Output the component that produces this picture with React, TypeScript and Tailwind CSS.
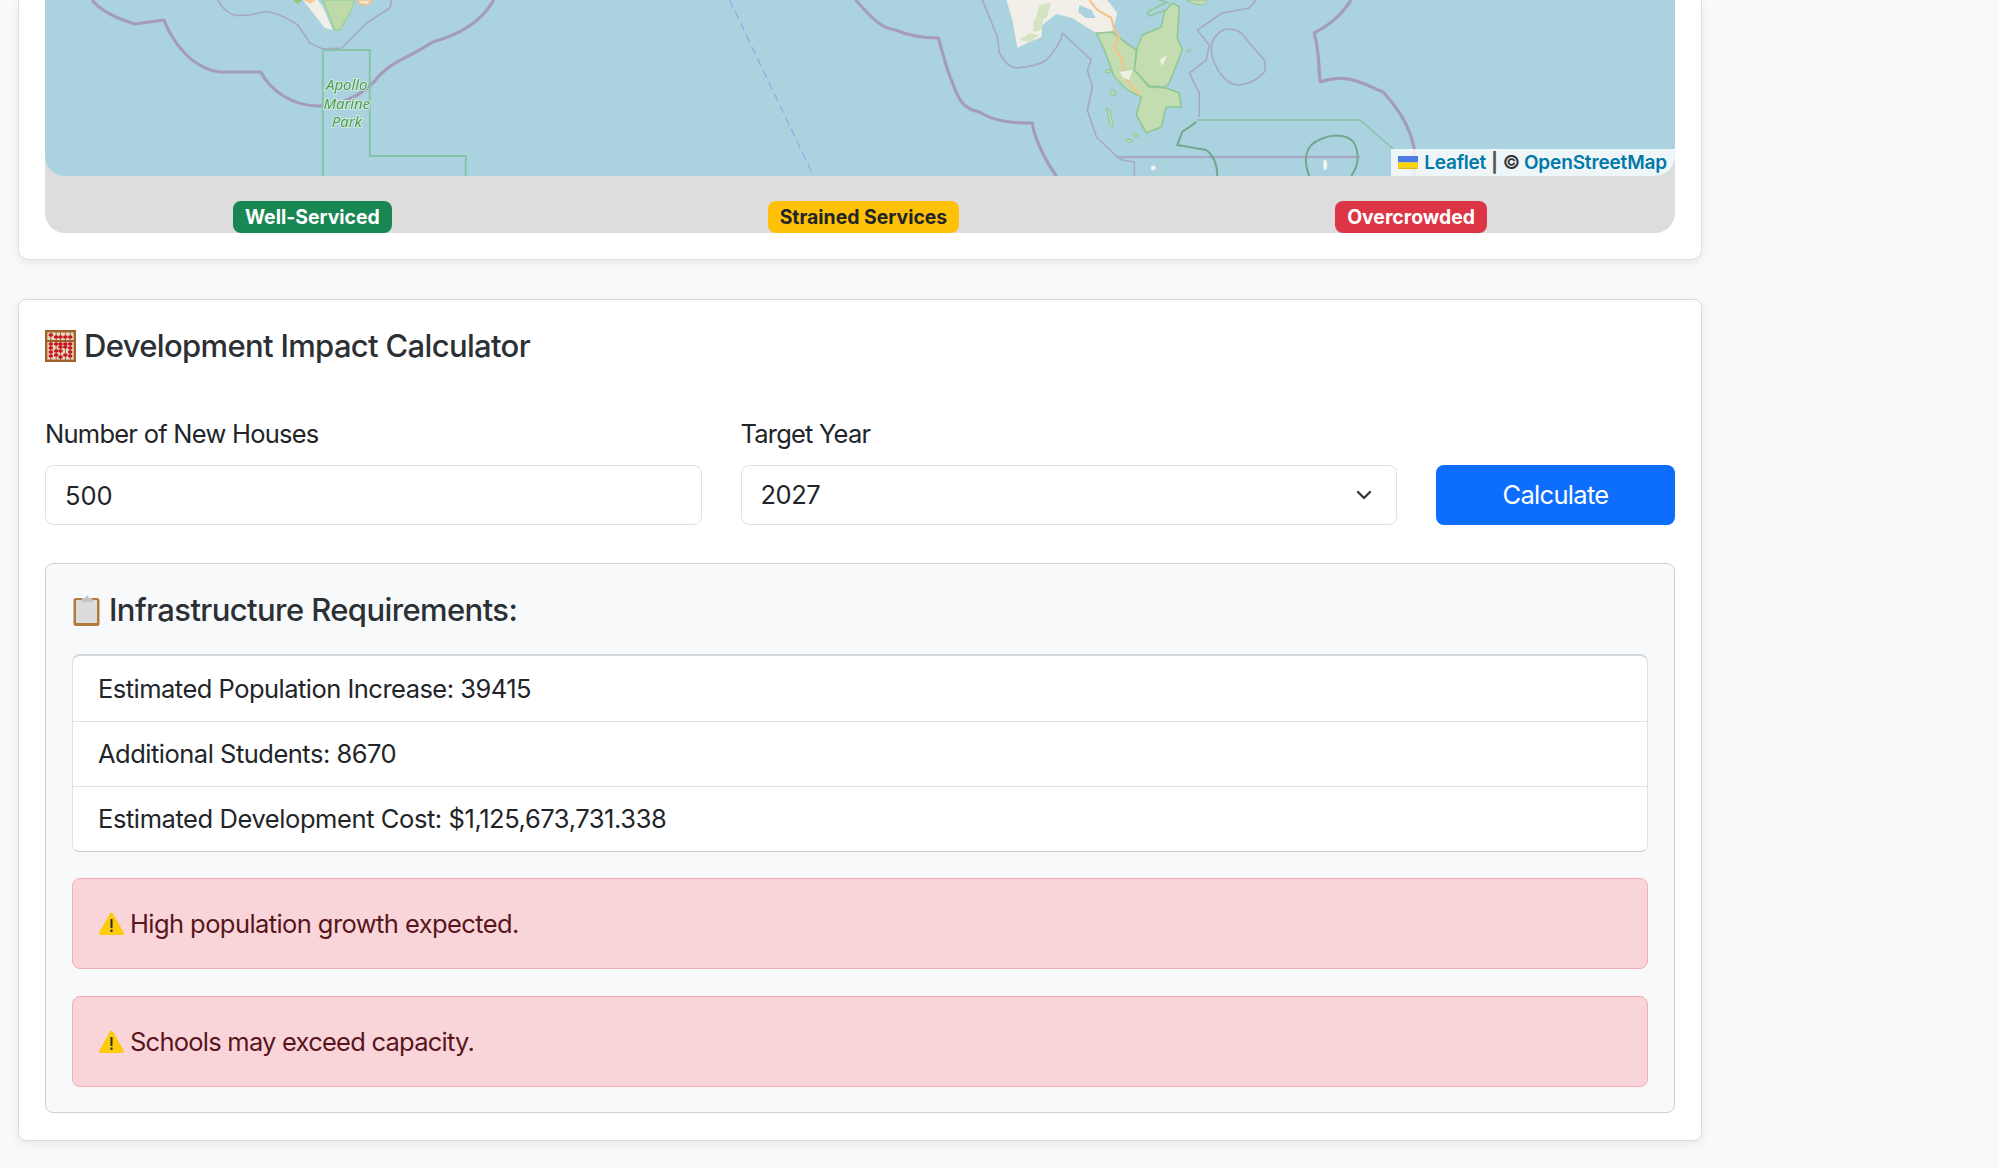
import { ChevronDown } from "lucide-react";

const AbacusIcon = () => (
  <svg width="31" height="32" viewBox="0 0 32 32" preserveAspectRatio="none" className="shrink-0">
    <rect x="1.2" y="1.2" width="29.6" height="29.6" fill="#e9d6bf" stroke="#a0622d" strokeWidth="2.4" />
    <rect x="1" y="10" width="30" height="2" fill="#a0622d" />
    {[6, 11.5, 16, 21, 26].map((x) => (
      <rect key={x} x={x - 0.4} y="2" width="0.8" height="28" fill="#8a5a2e" />
    ))}
    {[
      [6, 5], [11.5, 7], [16, 7], [21, 7], [26, 7],
      [6, 14], [11.5, 14], [16, 14], [21, 14], [26, 14],
      [6, 18], [16, 17], [21, 17], [26, 18],
      [6, 22], [11.5, 21], [16, 21], [26, 22],
      [6, 26], [11.5, 25], [16, 27], [21, 25], [26, 26],
    ].map(([x, y], i) => (
      <ellipse key={i} cx={x} cy={y} rx="2.4" ry="1.7" fill="#c8171e" />
    ))}
  </svg>
);

const ClipboardIcon = () => (
  <svg width="28" height="31" viewBox="0 0 28 31" className="ml-[1px] shrink-0">
    <rect x="0.5" y="3" width="26" height="28" rx="2.5" fill="#b27a3c" />
    <rect x="3" y="5" width="21" height="23" fill="#dcdcdc" />
    <path d="M8 5 L10 3 L12 3 L14 0 L16 3 L18 3 L20 5 L20 7 L8 7 Z" fill="#c2c6cc" />
  </svg>
);

const WarningIcon = () => (
  <svg width="25" height="23" viewBox="0 0 25 23" className="shrink-0">
    <path d="M12.5 0.5 C13.5 0.5 14 1.5 14.5 2.5 L24.5 20 C25.2 21.5 24.5 23 23 23 L2 23 C0.5 23 -0.2 21.5 0.5 20 L10.5 2.5 C11 1.5 11.5 0.5 12.5 0.5 Z" fill="#fdcb09" />
    <rect x="11.5" y="7" width="2" height="9" fill="#2b2b1c" />
    <rect x="11.5" y="17.5" width="2" height="2.4" fill="#2b2b1c" />
  </svg>
);

const UkraineFlag = () => (
  <svg width="20" height="13" viewBox="0 0 12 8" preserveAspectRatio="none" className="mr-[6px] shrink-0">
    <rect width="12" height="4" fill="#4c7be1" />
    <rect y="4" width="12" height="3" fill="#ffd500" />
    <rect y="7" width="12" height="1" fill="#e0bc00" />
  </svg>
);

// tile image stand-in, drawn in page coordinates
const MapDrawing = () => (
  <svg viewBox="45 0 1631 176" className="block h-full w-full blur-[0.5px]" preserveAspectRatio="none">
    <rect x="40" y="-5" width="1640" height="186" fill="#aad3df" />

    {/* west island */}
    <path d="M323 0 L335 30 L340 30 L350 13 L355 0 Z" fill="#bfdaa9" stroke="#9fcf9d" strokeWidth="1.5" />
    <path d="M303 0 L325 28 L333 30 L323 7 L318 0 Z" fill="#f2efe9" />
    <path d="M293 0 L303 0 L298 4 Z" fill="#8fca78" />
    <path d="M304 0 L316 0 L310 4 Z" fill="#f5c98f" />
    <path d="M358 0 L372 0 L368 5 L360 4 Z" fill="#f2e4cc" stroke="#f0c08a" strokeWidth="1.5" />

    {/* promontory */}
    <path d="M1007 0 L1013 20 L1018 48 L1030 42 L1042 37 L1043 25 L1057 14 L1073 18 L1087 27 L1097 33 L1113 32 L1118 13 L1108 0 Z" fill="#f2efe9" />
    <path d="M1040 5 L1052 3 L1047 18 L1036 20 Z M1034 20 L1044 18 L1042 30 L1034 32 Z M1020 40 L1030 33 L1040 35 L1030 42 Z" fill="#d4e4c2" />
    <path d="M1080 5 L1092 10 L1096 18 L1086 18 L1079 12 Z" fill="#aad3df" />
    <path d="M1097 33 L1113 32 L1127 43 L1137 50 L1135 70 L1150 87 L1167 88 L1180 93 L1182 107 L1167 107 L1162 127 L1147 133 L1137 115 L1142 97 L1128 90 L1115 77 L1105 50 Z" fill="#c3dcb0" stroke="#8fc79a" strokeWidth="1.6" strokeLinejoin="round" />
    <path d="M1173 3 L1180 7 L1178 37 L1183 50 L1170 83 L1165 87 L1150 86 L1135 70 L1138 47 L1143 35 L1162 27 L1165 12 Z" fill="#c3dcb0" stroke="#8fc79a" strokeWidth="1.6" strokeLinejoin="round" />
    <path d="M1168 2 L1148 12 L1150 16 L1166 10 M1160 0 L1170 3" fill="none" stroke="#8fc79a" strokeWidth="1.5" />
    <path d="M1187 0 L1208 0 L1205 5 L1195 4 Z" fill="#c3dcb0" stroke="#8fc79a" strokeWidth="1" />
    <path d="M1090 0 L1098 10 L1112 18 L1115 30 L1120 37 L1115 47 L1123 60 L1125 77 L1140 95" fill="none" stroke="#f3c48a" strokeWidth="2.2" />
    <path d="M1120 72 L1133 70 L1130 80 L1124 78 Z M1160 60 L1168 55 L1163 66 Z" fill="#eef0e4" />
    <path d="M1106 70 l6 -1 l-1 3 l-5 1 Z M1111 90 l4 0 l1 6 l-4 -1 Z M1107 108 l4 2 l1 8 l2 6 l-1 4 l-3 -4 l-1 -8 Z M1134 135 l3 -2 l2 3 l-3 2 Z M1127 140 l5 -1 l2 2 l-5 2 Z M1188 50 l3 -1 l0 3 l-3 0 Z" fill="#bcd9a8" stroke="#8fc79a" strokeWidth="1" />
    <ellipse cx="1326" cy="165" rx="2" ry="5" fill="#f4f4f0" />
    <circle cx="1154" cy="168" r="2.4" fill="#f4f4f0" />

    {/* boundaries */}
    <g fill="none" stroke="#a59cbd" strokeWidth="3.2" strokeLinejoin="round">
      <path d="M92 0 C100 10 115 18 135 24 L164 20 C172 40 190 68 220 72 L261 72 C270 90 292 106 319 106 C340 106 365 95 380 75 C395 60 405 60 433 42 C455 36 480 25 494 0" />
      <path d="M856 0 C870 15 880 28 896 30 C910 36 925 38 939 38 C945 60 948 70 950 75 C958 95 960 108 980 112 C995 122 1015 123 1033 123 C1034 135 1045 160 1057 176" />
      <path d="M1352 0 C1340 18 1328 26 1315 33 C1321 55 1319 70 1321 82 C1350 72 1365 85 1384 92 C1400 110 1410 125 1415 148 L1415 176" />
    </g>
    <g fill="none" stroke="#a8a9c6" strokeWidth="1.7" strokeLinejoin="round">
      <path d="M218 0 C222 8 232 18 241 15 C252 17 262 10 270 12 L280 15 L290 20 L298 25 L310 43 L323 49 L342 48 L360 30 L367 23 L390 8 L392 0" />
      <path d="M983 0 L998 37 L1000 53 C1005 62 1010 68 1017 68 C1030 67 1040 65 1047 60 C1056 50 1062 42 1063 33 L1092 60 L1088 70 L1093 87 L1088 110 L1097 137 L1118 157 L1123 160 L1135 162 L1135 176" />
      <path d="M1118 157 L1361 157" strokeWidth="2.4" />
      <path d="M1257 0 L1250 8 L1223 13 L1198 30 L1210 45 L1207 60 L1190 73 L1200 93 L1200 117" />
      <path d="M1228 29 C1236 29 1242 33 1242 33 L1252 45 L1265 60 C1268 72 1264 74 1260 77 C1252 83 1246 85 1238 85 C1230 84 1224 78 1220 72 C1214 62 1212 56 1212 50 C1212 38 1220 30 1228 29 Z" />
    </g>
    <g fill="none" stroke="#86c4aa" strokeWidth="2">
      <path d="M323 176 L323 50 L370 50 L370 156 L466 156 L466 176" />
      <path d="M1197 120 L1361 120 L1395 150" strokeWidth="1.6" />
    </g>
    <g fill="none" stroke="#72a78e" strokeWidth="2">
      <path d="M1197 122 L1183 132 L1178 145 L1207 150 C1215 156 1218 166 1218 176" />
      <path d="M1310 176 C1304 160 1305 145 1322 139 C1335 133 1352 135 1356 145 C1360 155 1360 165 1352 176" />
    </g>
    <path d="M730 0 L814 176" fill="none" stroke="#8fa8e6" strokeWidth="1.2" strokeDasharray="8 5" />

    <g fontFamily="'Open Sans', sans-serif" fontStyle="italic" fontSize="15" textAnchor="middle" fill="#46a04a" stroke="#cfe6e0" strokeWidth="2.2" paintOrder="stroke">
      <text x="347" y="90">Apollo</text>
      <text x="347" y="109">Marine</text>
      <text x="347" y="127">Park</text>
    </g>
  </svg>
);

const Alert = ({ text, tracking }: { text: string; tracking: string }) => (
  <div className="flex h-[91px] items-center gap-[6px] rounded-[8px] border border-[#f1aeb5] bg-[#f9d5da] px-[26px] text-[#58151c]">
    <WarningIcon />
    <span className={tracking}>{text}</span>
  </div>
);

export default function App() {
  const rows = [
    { text: "Estimated Population Increase: 39415", tracking: "tracking-[-0.52px]" },
    { text: "Additional Students: 8670", tracking: "tracking-[-0.5px]" },
    { text: "Estimated Development Cost: $1,125,673,731.338", tracking: "tracking-[-0.42px]" },
  ];

  return (
    <div className="h-[1168px] overflow-hidden bg-[#f8f9fa] font-['Inter',sans-serif] text-[25.5px] leading-[38px] text-[#212529]">
      <div className="ml-[18px] flex w-[1684px] flex-col gap-[39px]">
        {/* Map card */}
        <div className="rounded-b-[10px] border border-t-0 border-[#dcdee0] bg-white px-[26px] pb-[26px] shadow-[0_3px_8px_rgba(0,0,0,0.07)]">
          <div className="h-[233px] overflow-hidden rounded-b-[20px] bg-[#dddddd]">
            <div className="relative h-[176px] overflow-hidden rounded-b-[20px]">
              <MapDrawing />
              <div className="absolute bottom-0 right-0 flex h-[27px] items-center bg-white/80 pl-[7px] pr-[8px] text-[19px] font-semibold leading-[27px] tracking-[-0.25px] text-[#333333]">
                <UkraineFlag />
                <span className="text-[#0078a8]">Leaflet</span>
                <span className="mx-[5px] font-bold text-[#555555]">|</span>
                <span>©</span>
                <span className="ml-[4px] tracking-[-0.15px] text-[#0078a8]">OpenStreetMap</span>
              </div>
            </div>
            <div className="flex justify-around pt-[25px]">
              <span className="h-[32px] rounded-[8px] bg-[#198754] px-[12px] text-[19.4px] font-bold leading-[33px] text-white">Well-Serviced</span>
              <span className="h-[32px] rounded-[8px] bg-[#ffc107] px-[12px] text-[19.4px] font-bold leading-[33px] text-[#212529]">Strained Services</span>
              <span className="h-[32px] rounded-[8px] bg-[#dc3545] px-[12px] text-[19.4px] font-bold leading-[33px] text-white">Overcrowded</span>
            </div>
          </div>
        </div>

        {/* Calculator card */}
        <div className="rounded-[8px] border border-[#d8dadc] bg-white px-[26px] pb-[27px] pt-[27px] shadow-[0_3px_8px_rgba(0,0,0,0.07)]">
          <h5 className="flex items-center gap-[8px] text-[31px] font-medium leading-[38px] tracking-[-0.66px] text-[#2b3035]">
            <AbacusIcon />
            Development Impact Calculator
          </h5>

          <div className="mt-[50px] flex items-end gap-[39px]">
            <div className="flex-1">
              <label className="mb-[12px] block tracking-[-0.75px]">Number of New Houses</label>
              <input
                type="number"
                defaultValue={500}
                className="block h-[60px] w-full rounded-[8px] border border-[#dee2e6] bg-white px-[19px] text-[25.5px] text-[#212529] outline-none"
              />
            </div>
            <div className="flex-1">
              <label className="mb-[12px] block tracking-[-0.8px]">Target Year</label>
              <div className="relative">
                <select
                  defaultValue="2027"
                  className="block h-[60px] w-full appearance-none rounded-[8px] border border-[#dee2e6] bg-white px-[19px] text-[25.5px] tracking-[-0.5px] text-[#212529] outline-none"
                >
                  <option>2025</option>
                  <option>2026</option>
                  <option>2027</option>
                </select>
                <ChevronDown className="pointer-events-none absolute right-[21px] top-[18px] h-[24px] w-[24px] text-[#343a40]" strokeWidth={2.4} />
              </div>
            </div>
            <button className="h-[60px] w-[239px] rounded-[8px] bg-[#0d6efd] text-[25.5px] tracking-[-0.7px] text-white">Calculate</button>
          </div>

          <div className="mt-[38px] flex flex-col rounded-[8px] border border-[#ced1d4] bg-[#f8f9fa] px-[26px] pb-[25px] pt-[27px]">
            <h5 className="mb-[25px] flex items-center gap-[8px] text-[31px] font-medium leading-[38px] tracking-[-0.6px] text-[#2b3035]">
              <ClipboardIcon />
              Infrastructure Requirements:
            </h5>
            <ul className="overflow-hidden rounded-[8px] border border-t-2 border-[#dee2e6] border-t-[#d3d6d9] border-b-[#c9ccd0] bg-white">
              {rows.map((row, i) => (
                <li key={row.text} className={`h-[65px] px-[25px] ${row.tracking} ${i > 0 ? "border-t border-[#dee2e6] leading-[64px]" : "leading-[66px]"}`}>
                  {row.text}
                </li>
              ))}
            </ul>
            <div className="mt-[26px] flex flex-col gap-[27px]">
              <Alert text="High population growth expected." tracking="tracking-[-0.58px]" />
              <Alert text="Schools may exceed capacity." tracking="tracking-[-0.76px]" />
            </div>
          </div>
        </div>
      </div>
    </div>
  );
}
